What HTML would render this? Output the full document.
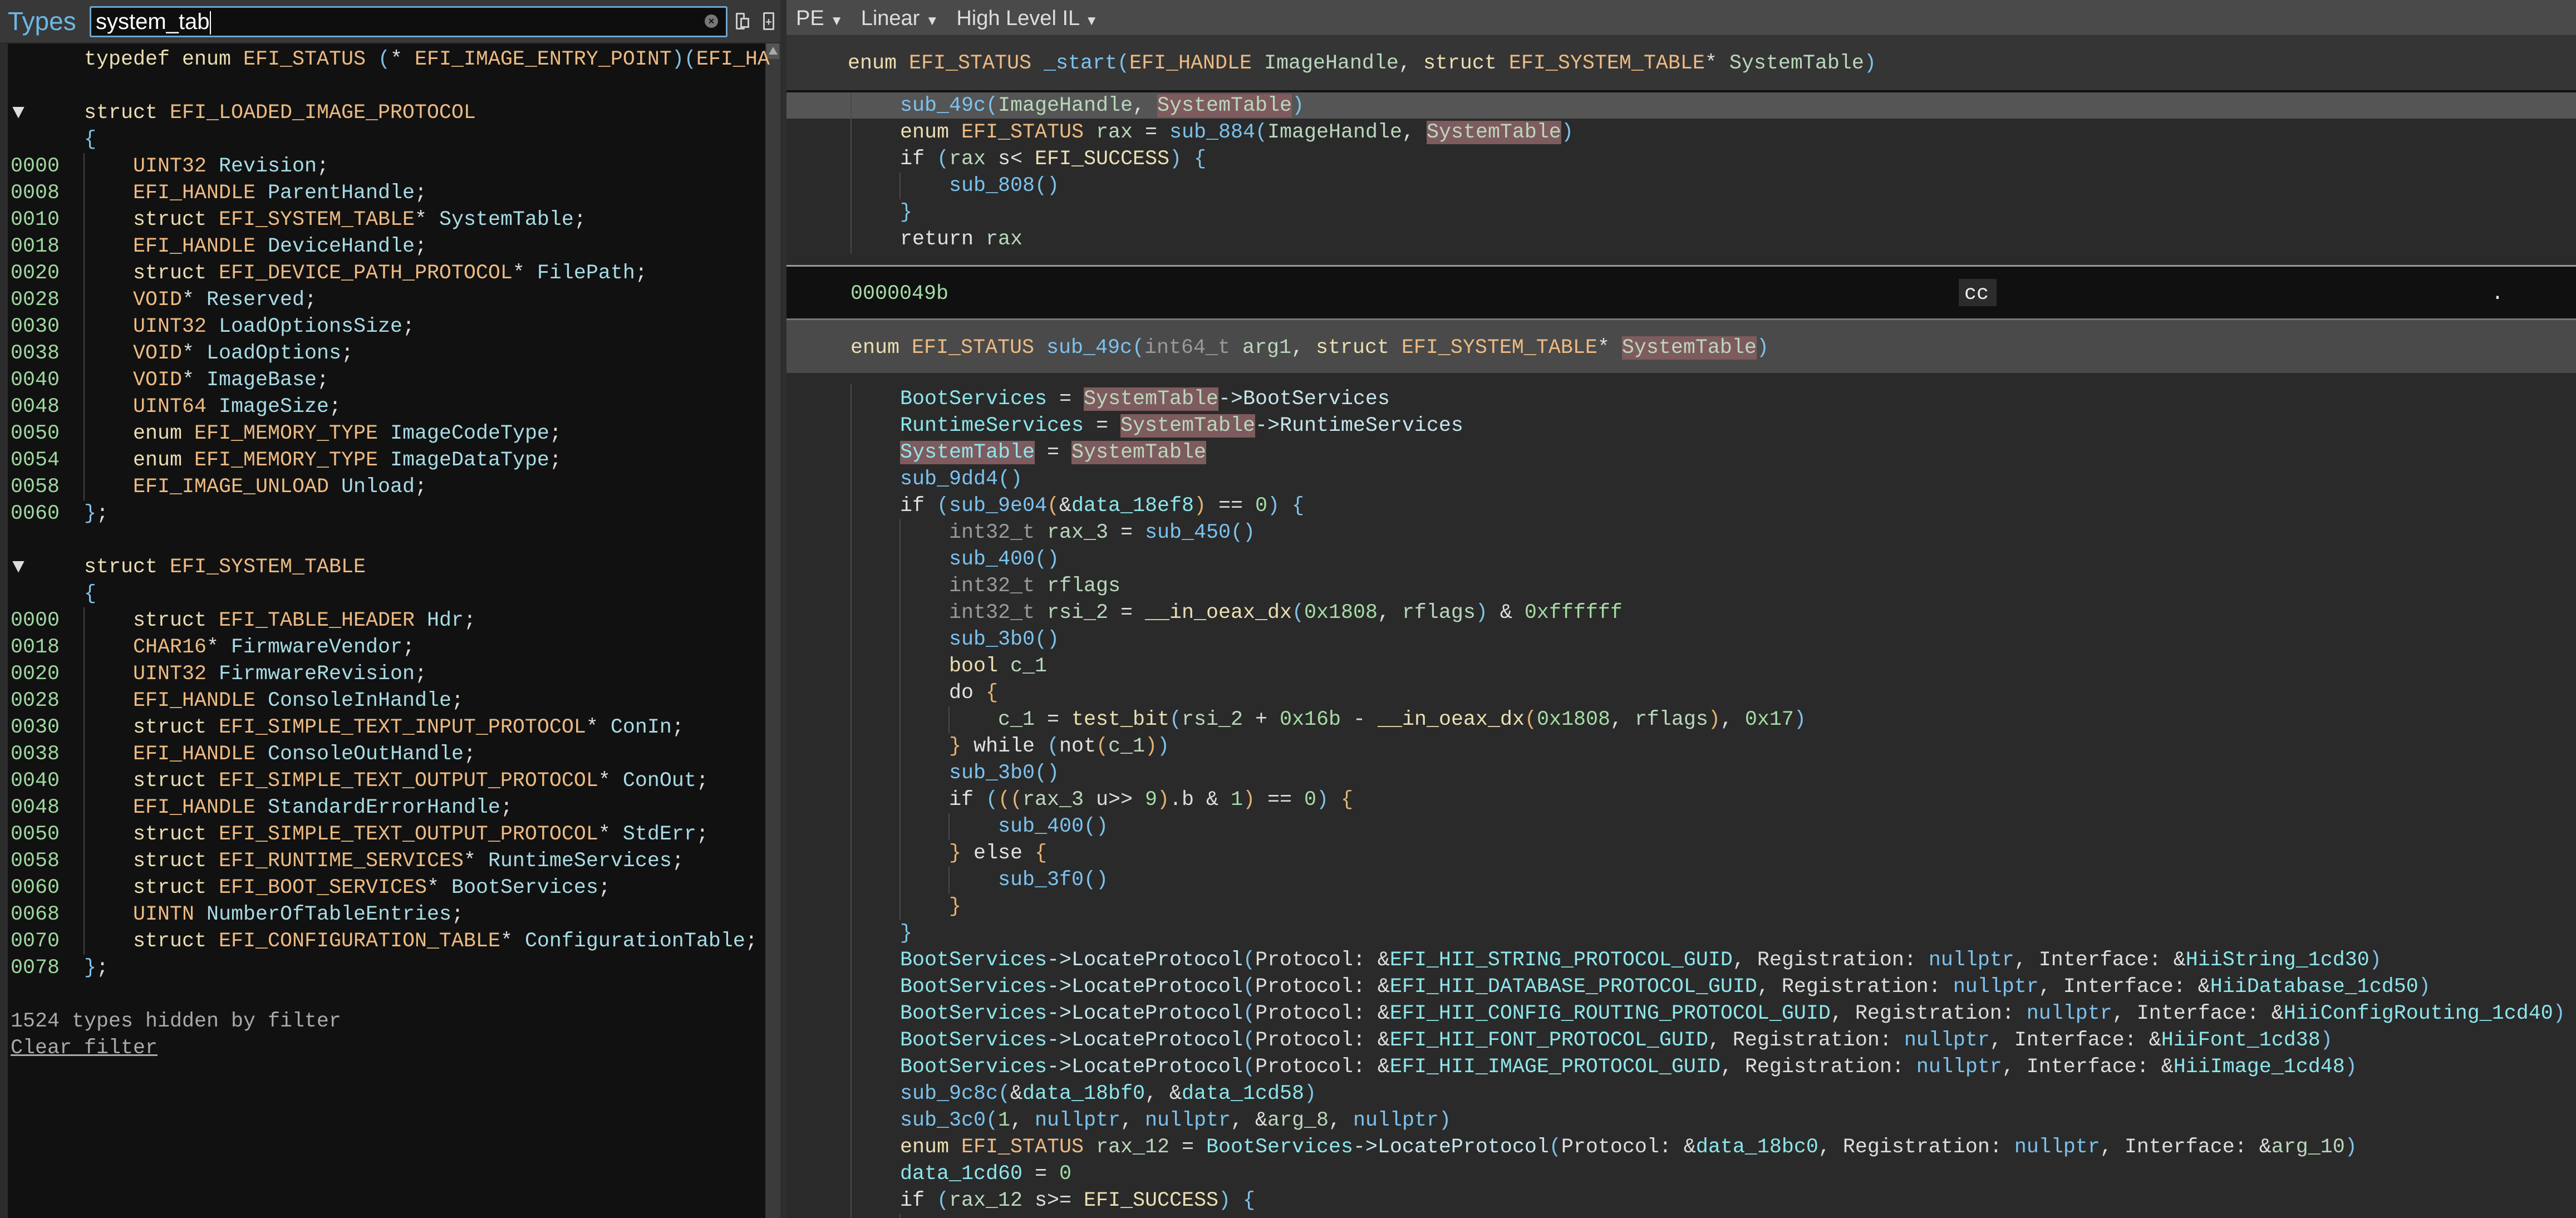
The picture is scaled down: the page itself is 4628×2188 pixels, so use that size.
<!DOCTYPE html>
<html><head><meta charset="utf-8">
<style>
*{margin:0;padding:0;box-sizing:border-box}
html,body{width:4628px;height:2188px;overflow:hidden;background:#2a2a2a}
body{position:relative;font-family:"Liberation Mono",monospace;font-size:36.67px}
.a{position:absolute}
.l{position:absolute;white-space:pre;height:48px;line-height:48px;color:#ddd}
.k{color:#ecdfb2}.w{color:#e2e2e2}.t{color:#edba82}.f{color:#7cc3f0}.g{color:#8ee6ec}
.m{color:#c6e4ec}.v{color:#bad7bc}.n{color:#a6dca6}.p1{color:#7fc3ea}.p2{color:#e6b271}
.gr{color:#9a9a9a}.h{background:#7e5b5e}.mb{color:#a8dce6}.off{color:#9fd8a0}
.vl{position:absolute;width:2px;background:#4a4a4a}
.sans{font-family:"Liberation Sans",sans-serif}
</style></head><body>
<!-- left panel -->
<div class="a" style="left:0;top:0;width:1413px;height:2188px;background:#2c2c2c"></div>
<div class="a" style="left:0;top:0;width:1413px;height:76px;background:#383838"></div>
<div class="a sans" style="left:14px;top:10px;font-size:46px;color:#6cb8e4;line-height:56px">Types</div>
<div class="a" style="left:161px;top:11px;width:1146px;height:56px;background:#0e0e0e;border:3px solid #6ca6cf;border-radius:3px"></div>
<div class="a sans" style="left:172px;top:16px;font-size:40px;line-height:46px;color:#fff">system_tab<span style="display:inline-block;width:2px;height:42px;background:#fff;vertical-align:middle"></span></div>
<div class="a" style="left:1266px;top:26px;width:24px;height:24px;border-radius:12px;background:#777;color:#111;font:bold 18px 'Liberation Sans';text-align:center;line-height:24px">×</div>
<div class="a" style="left:1322px;top:23px;width:16px;height:30px;border:3px solid #ccc;border-radius:2px"></div>
<div class="a" style="left:1330px;top:32px;width:16px;height:18px;border:3px solid #ccc;background:#383838"></div>
<div class="a" style="left:1371px;top:22px;width:20px;height:32px;border:3px solid #ccc;border-radius:2px;color:#ccc;font:bold 20px 'Liberation Sans';text-align:center;line-height:30px">+</div>

<div class="a" style="left:14px;top:78px;width:1361px;height:2110px;background:#111"></div>
<div class="a" style="left:1375px;top:78px;width:27px;height:2110px;background:#3b3b3b"></div>
<div class="a" style="left:1377px;top:78px;width:23px;height:28px;background:#555"></div>
<div class="a" style="left:1381px;top:84px;width:0;height:0;border-left:8px solid transparent;border-right:8px solid transparent;border-bottom:14px solid #aaa"></div>
<div class="a" style="left:1402px;top:0;width:11px;height:2188px;background:#2e2e2e"></div>

<div class="l" style="left:151px;top:83px"><span class="k">typedef enum </span><span class="t">EFI_STATUS</span> <span class="p1">(</span>* <span class="t">EFI_IMAGE_ENTRY_POINT</span><span class="p1">)(</span><span class="t">EFI_HA</span></div>
<div class="l" style="left:22px;top:179px">▼</div>
<div class="l" style="left:151px;top:179px"><span class="k">struct </span><span class="t">EFI_LOADED_IMAGE_PROTOCOL</span></div>
<div class="l p1" style="left:151px;top:227px">{</div>
<div class="vl" style="left:150px;top:275px;height:624px;background:#444"></div>
<div class="l off" style="left:19px;top:275px">0000
0008
0010
0018
0020
0028
0030
0038
0040
0048
0050
0054
0058
0060</div>
<div class="l" style="left:239px;top:275px;line-height:48px"><span class="t">UINT32</span> <span class="mb">Revision</span>;
<span class="t">EFI_HANDLE</span> <span class="mb">ParentHandle</span>;
<span class="k">struct</span> <span class="t">EFI_SYSTEM_TABLE</span>* <span class="mb">SystemTable</span>;
<span class="t">EFI_HANDLE</span> <span class="mb">DeviceHandle</span>;
<span class="k">struct</span> <span class="t">EFI_DEVICE_PATH_PROTOCOL</span>* <span class="mb">FilePath</span>;
<span class="t">VOID</span>* <span class="mb">Reserved</span>;
<span class="t">UINT32</span> <span class="mb">LoadOptionsSize</span>;
<span class="t">VOID</span>* <span class="mb">LoadOptions</span>;
<span class="t">VOID</span>* <span class="mb">ImageBase</span>;
<span class="t">UINT64</span> <span class="mb">ImageSize</span>;
<span class="k">enum</span> <span class="t">EFI_MEMORY_TYPE</span> <span class="mb">ImageCodeType</span>;
<span class="k">enum</span> <span class="t">EFI_MEMORY_TYPE</span> <span class="mb">ImageDataType</span>;
<span class="t">EFI_IMAGE_UNLOAD</span> <span class="mb">Unload</span>;</div>
<div class="l" style="left:151px;top:899px"><span class="p1">}</span>;</div>

<div class="l" style="left:22px;top:995px">▼</div>
<div class="l" style="left:151px;top:995px"><span class="k">struct </span><span class="t">EFI_SYSTEM_TABLE</span></div>
<div class="l p1" style="left:151px;top:1043px">{</div>
<div class="vl" style="left:150px;top:1091px;height:624px;background:#444"></div>
<div class="l off" style="left:19px;top:1091px">0000
0018
0020
0028
0030
0038
0040
0048
0050
0058
0060
0068
0070
0078</div>
<div class="l" style="left:239px;top:1091px"><span class="k">struct</span> <span class="t">EFI_TABLE_HEADER</span> <span class="mb">Hdr</span>;
<span class="t">CHAR16</span>* <span class="mb">FirmwareVendor</span>;
<span class="t">UINT32</span> <span class="mb">FirmwareRevision</span>;
<span class="t">EFI_HANDLE</span> <span class="mb">ConsoleInHandle</span>;
<span class="k">struct</span> <span class="t">EFI_SIMPLE_TEXT_INPUT_PROTOCOL</span>* <span class="mb">ConIn</span>;
<span class="t">EFI_HANDLE</span> <span class="mb">ConsoleOutHandle</span>;
<span class="k">struct</span> <span class="t">EFI_SIMPLE_TEXT_OUTPUT_PROTOCOL</span>* <span class="mb">ConOut</span>;
<span class="t">EFI_HANDLE</span> <span class="mb">StandardErrorHandle</span>;
<span class="k">struct</span> <span class="t">EFI_SIMPLE_TEXT_OUTPUT_PROTOCOL</span>* <span class="mb">StdErr</span>;
<span class="k">struct</span> <span class="t">EFI_RUNTIME_SERVICES</span>* <span class="mb">RuntimeServices</span>;
<span class="k">struct</span> <span class="t">EFI_BOOT_SERVICES</span>* <span class="mb">BootServices</span>;
<span class="t">UINTN</span> <span class="mb">NumberOfTableEntries</span>;
<span class="k">struct</span> <span class="t">EFI_CONFIGURATION_TABLE</span>* <span class="mb">ConfigurationTable</span>;</div>
<div class="l" style="left:151px;top:1715px"><span class="p1">}</span>;</div>
<div class="l" style="left:19px;top:1811px;color:#aaa">1524 types hidden by filter</div>
<div class="l" style="left:19px;top:1859px;color:#aaa;text-decoration:underline">Clear filter</div>

<!-- right pane -->
<div class="a" style="left:1413px;top:0;width:3215px;height:65px;background:#4a4a4a;border-bottom:2px solid #333"></div>
<div class="a sans" style="left:1430px;top:10px;font-size:38px;line-height:46px;color:#ddd;white-space:pre">PE <span style="font-size:24px">▼</span>   Linear <span style="font-size:24px">▼</span>   High Level IL <span style="font-size:24px">▼</span></div>
<div class="a" style="left:1413px;top:65px;width:3215px;height:97px;background:#353535"></div>
<div class="a" style="left:1413px;top:162px;width:3215px;height:4px;background:#111"></div>
<div class="a" style="left:1413px;top:166px;width:3215px;height:47px;background:#555"></div>
<div class="a" style="left:1413px;top:476px;width:3215px;height:3px;background:#9a9a9a"></div>
<div class="a" style="left:1413px;top:479px;width:3215px;height:93px;background:#101010"></div>
<div class="a" style="left:1413px;top:572px;width:3215px;height:3px;background:#777"></div>
<div class="a" style="left:1413px;top:575px;width:3215px;height:95px;background:#4a4a4a"></div>

<div class="l" style="left:1523px;top:90px"><span class="k">enum</span> <span class="t">EFI_STATUS</span> <span class="f">_start</span><span class="p1">(</span><span class="t">EFI_HANDLE</span> <span class="v">ImageHandle</span>, <span class="k">struct</span> <span class="t">EFI_SYSTEM_TABLE</span>* <span class="v">SystemTable</span><span class="p1">)</span></div>
<div class="vl" style="left:1528px;top:166px;height:290px"></div>
<div class="vl" style="left:1616px;top:310px;height:48px"></div>
<div class="l" style="left:1617px;top:166px"><span class="f">sub_49c</span><span class="p1">(</span><span class="v">ImageHandle</span>, <span class="v h">SystemTable</span><span class="p1">)</span></div>
<div class="l" style="left:1617px;top:214px"><span class="k">enum</span> <span class="t">EFI_STATUS</span> <span class="v">rax</span> = <span class="f">sub_884</span><span class="p1">(</span><span class="v">ImageHandle</span>, <span class="v h">SystemTable</span><span class="p1">)</span></div>
<div class="l" style="left:1617px;top:262px"><span class="w">if</span> <span class="p1">(</span><span class="v">rax</span> s&lt; <span class="k">EFI_SUCCESS</span><span class="p1">)</span> <span class="p1">{</span></div>
<div class="l" style="left:1705px;top:310px"><span class="f">sub_808</span><span class="p1">()</span></div>
<div class="l p1" style="left:1617px;top:358px">}</div>
<div class="l" style="left:1617px;top:406px"><span class="w">return</span> <span class="v">rax</span></div>

<div class="l n" style="left:1528px;top:504px">0000049b</div>
<div class="a" style="left:3519px;top:501px;width:68px;height:49px;background:#2c2c2c"></div>
<div class="l" style="left:3529px;top:504px;color:#eee">cc</div>
<div class="l" style="left:4476px;top:504px;color:#eee">.</div>

<div class="l" style="left:1528px;top:601px"><span class="k">enum</span> <span class="t">EFI_STATUS</span> <span class="f">sub_49c</span><span class="p1">(</span><span class="gr">int64_t</span> <span class="v">arg1</span>, <span class="k">struct</span> <span class="t">EFI_SYSTEM_TABLE</span>* <span class="v h">SystemTable</span><span class="p1">)</span></div>

<div class="vl" style="left:1528px;top:690px;height:1498px"></div>
<div class="vl" style="left:1616px;top:933px;height:720px"></div>
<div class="vl" style="left:1704px;top:1269px;height:48px"></div>
<div class="vl" style="left:1704px;top:1461px;height:48px"></div>
<div class="vl" style="left:1704px;top:1557px;height:48px"></div>
<div class="vl" style="left:1616px;top:2181px;height:7px"></div>

<div class="l" style="left:1617px;top:693px"><span class="g">BootServices</span> = <span class="v h">SystemTable</span><span class="m">-&gt;BootServices</span></div>
<div class="l" style="left:1617px;top:741px"><span class="g">RuntimeServices</span> = <span class="v h">SystemTable</span><span class="m">-&gt;RuntimeServices</span></div>
<div class="l" style="left:1617px;top:789px"><span class="g h">SystemTable</span> = <span class="v h">SystemTable</span></div>
<div class="l" style="left:1617px;top:837px"><span class="f">sub_9dd4</span><span class="p1">()</span></div>
<div class="l" style="left:1617px;top:885px"><span class="w">if</span> <span class="p1">(</span><span class="f">sub_9e04</span><span class="p2">(</span>&amp;<span class="g">data_18ef8</span><span class="p2">)</span> == <span class="n">0</span><span class="p1">)</span> <span class="p1">{</span></div>
<div class="l" style="left:1705px;top:933px"><span class="gr">int32_t</span> <span class="v">rax_3</span> = <span class="f">sub_450</span><span class="p1">()</span></div>
<div class="l" style="left:1705px;top:981px"><span class="f">sub_400</span><span class="p1">()</span></div>
<div class="l" style="left:1705px;top:1029px"><span class="gr">int32_t</span> <span class="v">rflags</span></div>
<div class="l" style="left:1705px;top:1077px"><span class="gr">int32_t</span> <span class="v">rsi_2</span> = <span class="k">__in_oeax_dx</span><span class="p1">(</span><span class="n">0x1808</span>, <span class="v">rflags</span><span class="p1">)</span> &amp; <span class="n">0xffffff</span></div>
<div class="l" style="left:1705px;top:1125px"><span class="f">sub_3b0</span><span class="p1">()</span></div>
<div class="l" style="left:1705px;top:1173px"><span class="k">bool</span> <span class="v">c_1</span></div>
<div class="l" style="left:1705px;top:1221px"><span class="w">do</span> <span class="p2">{</span></div>
<div class="l" style="left:1793px;top:1269px"><span class="v">c_1</span> = <span class="k">test_bit</span><span class="p1">(</span><span class="v">rsi_2</span> + <span class="n">0x16b</span> - <span class="k">__in_oeax_dx</span><span class="p2">(</span><span class="n">0x1808</span>, <span class="v">rflags</span><span class="p2">)</span>, <span class="n">0x17</span><span class="p1">)</span></div>
<div class="l" style="left:1705px;top:1317px"><span class="p2">}</span> <span class="w">while</span> <span class="p1">(</span><span class="w">not</span><span class="p2">(</span><span class="v">c_1</span><span class="p2">)</span><span class="p1">)</span></div>
<div class="l" style="left:1705px;top:1365px"><span class="f">sub_3b0</span><span class="p1">()</span></div>
<div class="l" style="left:1705px;top:1413px"><span class="w">if</span> <span class="p1">(</span><span class="p2">((</span><span class="v">rax_3</span> u&gt;&gt; <span class="n">9</span><span class="p2">)</span>.b &amp; <span class="n">1</span><span class="p2">)</span> == <span class="n">0</span><span class="p1">)</span> <span class="p2">{</span></div>
<div class="l" style="left:1793px;top:1461px"><span class="f">sub_400</span><span class="p1">()</span></div>
<div class="l" style="left:1705px;top:1509px"><span class="p2">}</span> <span class="w">else</span> <span class="p2">{</span></div>
<div class="l" style="left:1793px;top:1557px"><span class="f">sub_3f0</span><span class="p1">()</span></div>
<div class="l p2" style="left:1705px;top:1605px">}</div>
<div class="l p1" style="left:1617px;top:1653px">}</div>
<div class="l" style="left:1617px;top:1701px"><span class="g">BootServices</span><span class="m">-&gt;LocateProtocol</span><span class="p1">(</span>Protocol: &amp;<span class="g">EFI_HII_STRING_PROTOCOL_GUID</span>, Registration: <span class="f">nullptr</span>, Interface: &amp;<span class="g">HiiString_1cd30</span><span class="p1">)</span></div>
<div class="l" style="left:1617px;top:1749px"><span class="g">BootServices</span><span class="m">-&gt;LocateProtocol</span><span class="p1">(</span>Protocol: &amp;<span class="g">EFI_HII_DATABASE_PROTOCOL_GUID</span>, Registration: <span class="f">nullptr</span>, Interface: &amp;<span class="g">HiiDatabase_1cd50</span><span class="p1">)</span></div>
<div class="l" style="left:1617px;top:1797px"><span class="g">BootServices</span><span class="m">-&gt;LocateProtocol</span><span class="p1">(</span>Protocol: &amp;<span class="g">EFI_HII_CONFIG_ROUTING_PROTOCOL_GUID</span>, Registration: <span class="f">nullptr</span>, Interface: &amp;<span class="g">HiiConfigRouting_1cd40</span><span class="p1">)</span></div>
<div class="l" style="left:1617px;top:1845px"><span class="g">BootServices</span><span class="m">-&gt;LocateProtocol</span><span class="p1">(</span>Protocol: &amp;<span class="g">EFI_HII_FONT_PROTOCOL_GUID</span>, Registration: <span class="f">nullptr</span>, Interface: &amp;<span class="g">HiiFont_1cd38</span><span class="p1">)</span></div>
<div class="l" style="left:1617px;top:1893px"><span class="g">BootServices</span><span class="m">-&gt;LocateProtocol</span><span class="p1">(</span>Protocol: &amp;<span class="g">EFI_HII_IMAGE_PROTOCOL_GUID</span>, Registration: <span class="f">nullptr</span>, Interface: &amp;<span class="g">HiiImage_1cd48</span><span class="p1">)</span></div>
<div class="l" style="left:1617px;top:1941px"><span class="f">sub_9c8c</span><span class="p1">(</span>&amp;<span class="g">data_18bf0</span>, &amp;<span class="g">data_1cd58</span><span class="p1">)</span></div>
<div class="l" style="left:1617px;top:1989px"><span class="f">sub_3c0</span><span class="p1">(</span><span class="n">1</span>, <span class="f">nullptr</span>, <span class="f">nullptr</span>, &amp;<span class="v">arg_8</span>, <span class="f">nullptr</span><span class="p1">)</span></div>
<div class="l" style="left:1617px;top:2037px"><span class="k">enum</span> <span class="t">EFI_STATUS</span> <span class="v">rax_12</span> = <span class="g">BootServices</span><span class="m">-&gt;LocateProtocol</span><span class="p1">(</span>Protocol: &amp;<span class="g">data_18bc0</span>, Registration: <span class="f">nullptr</span>, Interface: &amp;<span class="v">arg_10</span><span class="p1">)</span></div>
<div class="l" style="left:1617px;top:2085px"><span class="g">data_1cd60</span> = <span class="n">0</span></div>
<div class="l" style="left:1617px;top:2133px"><span class="w">if</span> <span class="p1">(</span><span class="v">rax_12</span> s&gt;= <span class="k">EFI_SUCCESS</span><span class="p1">)</span> <span class="p1">{</span></div>
</body></html>
